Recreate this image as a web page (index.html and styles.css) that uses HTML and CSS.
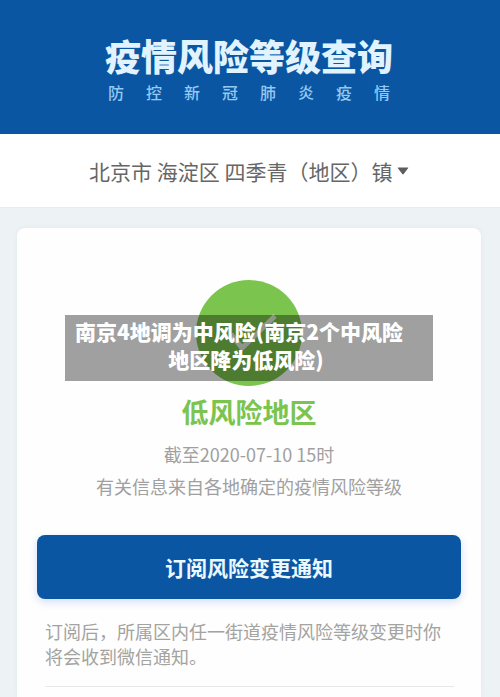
FILE: index.html
```html
<!DOCTYPE html>
<html lang="zh-CN">
<head>
  <meta charset="utf-8">
  <meta name="viewport" content="width=device-width, initial-scale=1">
  <title>疫情风险等级查询</title>
  <link rel="stylesheet" href="styles.css">
</head>
<body>
  <header class="banner">
    <h1 class="banner-title">疫情风险等级查询</h1>
    <p class="banner-subtitle">防控新冠肺炎疫情</p>
  </header>

  <div class="location">
    <select class="location-select" aria-label="选择地区">
      <option>北京市 海淀区 四季青（地区）镇</option>
    </select>
    <svg class="location-arrow" viewBox="0 0 12 8" aria-hidden="true"><path d="M1.2 0.5h9.6q.9 0 .3.8L6.7 7q-.7.8-1.4 0L.9 1.300q-.6-.8.3-.8z"/></svg>
  </div>

  <main class="card">
    <div class="status">
      <svg class="status-icon" viewBox="0 0 106 106" aria-hidden="true">
        <circle cx="53" cy="53" r="53"/>
        <path d="M35 54l11 14 33-32"/>
      </svg>
      <p class="caption">南京4地调为中风险(南京2个中风险地区降为低风险)</p>
    </div>
    <h2 class="level">低风险地区</h2>
    <p class="detail">截至2020-07-10 15时</p>
    <p class="detail">有关信息来自各地确定的疫情风险等级</p>
    <button class="subscribe" type="button">订阅风险变更通知</button>
    <p class="note">订阅后，所属区内任一街道疫情风险等级变更时你将会收到微信通知。</p>
  </main>
</body>
</html>
```
FILE: styles.css
```css
* {
  box-sizing: border-box;
}

body {
  margin: 0;
  min-height: 100vh;
  display: flex;
  flex-direction: column;
  background: #edf2f5;
  font-family: "Noto Sans CJK SC", sans-serif;
}

h1, h2, p {
  margin: 0;
}

.banner {
  display: flex;
  flex-direction: column;
  align-items: center;
  padding: 34px 21px 30px 19px;
  background: #0b56a3;
}

.banner-title {
  font-size: 36px;
  line-height: 42px;
  font-weight: 900;
  color: #e0f3ff;
}

.banner-subtitle {
  width: 282px;
  margin-top: 4px;
  font-size: 16px;
  line-height: 24px;
  font-weight: 500;
  text-align-last: justify;
  color: #93c9f2;
}

.location {
  display: flex;
  align-items: center;
  justify-content: center;
  gap: 4px;
  height: 74px;
  padding: 0 21px 0 19px;
  background: #fff;
  border-bottom: 1px solid #e8edf0;
}

.location-select {
  appearance: none;
  padding: 0;
  border: 0;
  background: none;
  font-family: inherit;
  font-size: 21px;
  line-height: 32px;
  color: #666;
}

.location-arrow {
  width: 12px;
  height: 8px;
  fill: #5e5e5e;
}

.card {
  flex: 1;
  margin: 20px 19px 0 17px;
  padding: 52px 20px 0;
  border-radius: 8px 8px 0 0;
  background: #fefefe;
  box-shadow: 0 0 4px #e2e7ea;
  text-align: center;
}

.status {
  position: relative;
}

.status-icon {
  display: block;
  width: 106px;
  height: 106px;
  margin: 0 auto;
}

.status-icon circle {
  fill: #7bc44e;
}

.status-icon path {
  fill: none;
  stroke: #e2ecdc;
  stroke-width: 5;
}

.caption {
  position: absolute;
  top: 35px;
  left: 28px;
  right: 28px;
  padding: 2px 16px 8px 10px;
  background: rgba(0, 0, 0, 0.37);
  font-size: 21px;
  line-height: 28px;
  font-weight: 900;
  text-align: left;
  text-align-last: center;
  color: #fff;
}

.level {
  margin: 8px 0;
  font-size: 27px;
  line-height: 36px;
  font-weight: 700;
  color: #7bc44e;
}

.detail {
  font-size: 18px;
  line-height: 32px;
  color: #a0a0a0;
}

.subscribe {
  display: block;
  width: 100%;
  margin-top: 33px;
  padding: 16px;
  border: 0;
  border-radius: 8px;
  background: #0b56a3;
  box-shadow: 0 3px 8px #d3def5;
  font-family: inherit;
  font-size: 21px;
  line-height: 32px;
  font-weight: 700;
  color: #ecf8ff;
}

.note {
  margin: 20px 7px 0 8px;
  padding-bottom: 17px;
  border-bottom: 1px solid #e8e8e8;
  font-size: 18px;
  line-height: 25px;
  text-align: left;
  color: #a3a3a0;
}
```
